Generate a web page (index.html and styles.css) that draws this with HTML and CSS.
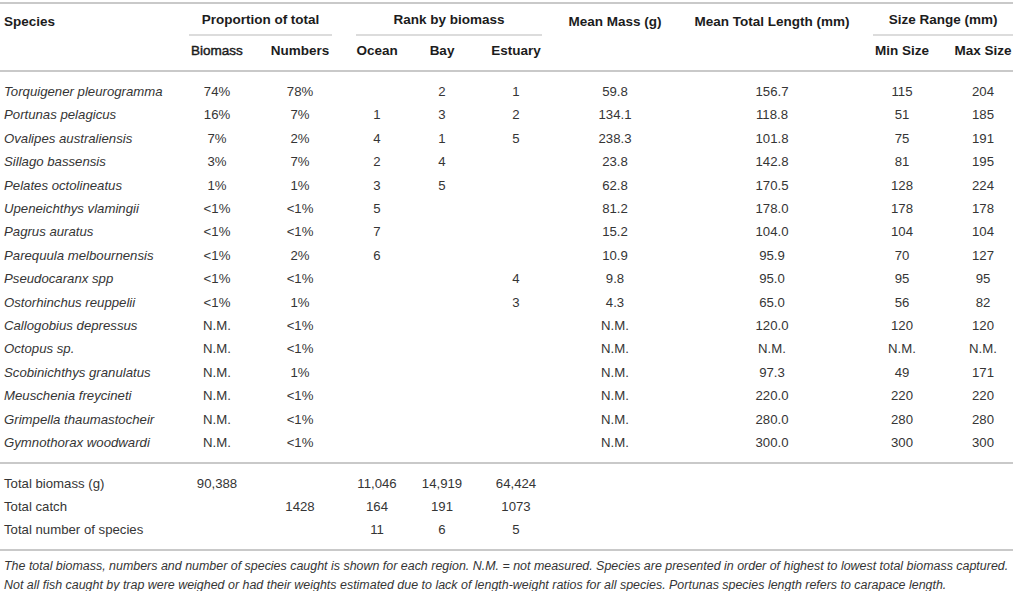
FILE: index.html
```html
<!DOCTYPE html>
<html lang="en">
<head>
<meta charset="utf-8">
<title>Species catch table</title>
<link rel="stylesheet" href="styles.css">
</head>
<body>
<div class="page">
<table class="tbl">
  <colgroup>
    <col class="c-sp"><col class="c-b"><col class="c-n"><col class="c-o"><col class="c-bay"><col class="c-e"><col class="c-mm"><col class="c-ml"><col class="c-min"><col class="c-max">
  </colgroup>
  <thead>
    <tr class="h1">
      <th rowspan="2" class="sp top">Species</th>
      <th colspan="2" class="grpcell"><div class="grp g-prop">Proportion of total</div></th>
      <th colspan="3" class="grpcell"><div class="grp g-rank">Rank by biomass</div></th>
      <th rowspan="2" class="top mm">Mean Mass (g)</th>
      <th rowspan="2" class="top ml">Mean Total Length (mm)</th>
      <th colspan="2" class="grpcell"><div class="grp g-size">Size Range (mm)</div></th>
    </tr>
    <tr class="h2">
      <th class="b semi">Biomass</th>
      <th class="n">Numbers</th>
      <th class="o">Ocean</th>
      <th class="bay">Bay</th>
      <th class="e">Estuary</th>
      <th class="min">Min Size</th>
      <th class="max">Max Size</th>
    </tr>
  </thead>
  <tbody class="data">
    <tr class="first"><td class="sp it">Torquigener pleurogramma</td><td class="b">74%</td><td class="n">78%</td><td class="o"></td><td class="bay">2</td><td class="e">1</td><td class="mm">59.8</td><td class="ml">156.7</td><td class="min">115</td><td class="max">204</td></tr>
    <tr><td class="sp it">Portunas pelagicus</td><td class="b">16%</td><td class="n">7%</td><td class="o">1</td><td class="bay">3</td><td class="e">2</td><td class="mm">134.1</td><td class="ml">118.8</td><td class="min">51</td><td class="max">185</td></tr>
    <tr><td class="sp it">Ovalipes australiensis</td><td class="b">7%</td><td class="n">2%</td><td class="o">4</td><td class="bay">1</td><td class="e">5</td><td class="mm">238.3</td><td class="ml">101.8</td><td class="min">75</td><td class="max">191</td></tr>
    <tr><td class="sp it">Sillago bassensis</td><td class="b">3%</td><td class="n">7%</td><td class="o">2</td><td class="bay">4</td><td class="e"></td><td class="mm">23.8</td><td class="ml">142.8</td><td class="min">81</td><td class="max">195</td></tr>
    <tr><td class="sp it">Pelates octolineatus</td><td class="b">1%</td><td class="n">1%</td><td class="o">3</td><td class="bay">5</td><td class="e"></td><td class="mm">62.8</td><td class="ml">170.5</td><td class="min">128</td><td class="max">224</td></tr>
    <tr><td class="sp it">Upeneichthys vlamingii</td><td class="b">&lt;1%</td><td class="n">&lt;1%</td><td class="o">5</td><td class="bay"></td><td class="e"></td><td class="mm">81.2</td><td class="ml">178.0</td><td class="min">178</td><td class="max">178</td></tr>
    <tr><td class="sp it">Pagrus auratus</td><td class="b">&lt;1%</td><td class="n">&lt;1%</td><td class="o">7</td><td class="bay"></td><td class="e"></td><td class="mm">15.2</td><td class="ml">104.0</td><td class="min">104</td><td class="max">104</td></tr>
    <tr><td class="sp it">Parequula melbournensis</td><td class="b">&lt;1%</td><td class="n">2%</td><td class="o">6</td><td class="bay"></td><td class="e"></td><td class="mm">10.9</td><td class="ml">95.9</td><td class="min">70</td><td class="max">127</td></tr>
    <tr><td class="sp it">Pseudocaranx spp</td><td class="b">&lt;1%</td><td class="n">&lt;1%</td><td class="o"></td><td class="bay"></td><td class="e">4</td><td class="mm">9.8</td><td class="ml">95.0</td><td class="min">95</td><td class="max">95</td></tr>
    <tr><td class="sp it">Ostorhinchus reuppelii</td><td class="b">&lt;1%</td><td class="n">1%</td><td class="o"></td><td class="bay"></td><td class="e">3</td><td class="mm">4.3</td><td class="ml">65.0</td><td class="min">56</td><td class="max">82</td></tr>
    <tr><td class="sp it">Callogobius depressus</td><td class="b">N.M.</td><td class="n">&lt;1%</td><td class="o"></td><td class="bay"></td><td class="e"></td><td class="mm">N.M.</td><td class="ml">120.0</td><td class="min">120</td><td class="max">120</td></tr>
    <tr><td class="sp it">Octopus sp.</td><td class="b">N.M.</td><td class="n">&lt;1%</td><td class="o"></td><td class="bay"></td><td class="e"></td><td class="mm">N.M.</td><td class="ml">N.M.</td><td class="min">N.M.</td><td class="max">N.M.</td></tr>
    <tr><td class="sp it">Scobinichthys granulatus</td><td class="b">N.M.</td><td class="n">1%</td><td class="o"></td><td class="bay"></td><td class="e"></td><td class="mm">N.M.</td><td class="ml">97.3</td><td class="min">49</td><td class="max">171</td></tr>
    <tr><td class="sp it">Meuschenia freycineti</td><td class="b">N.M.</td><td class="n">&lt;1%</td><td class="o"></td><td class="bay"></td><td class="e"></td><td class="mm">N.M.</td><td class="ml">220.0</td><td class="min">220</td><td class="max">220</td></tr>
    <tr><td class="sp it">Grimpella thaumastocheir</td><td class="b">N.M.</td><td class="n">&lt;1%</td><td class="o"></td><td class="bay"></td><td class="e"></td><td class="mm">N.M.</td><td class="ml">280.0</td><td class="min">280</td><td class="max">280</td></tr>
    <tr class="last"><td class="sp it">Gymnothorax woodwardi</td><td class="b">N.M.</td><td class="n">&lt;1%</td><td class="o"></td><td class="bay"></td><td class="e"></td><td class="mm">N.M.</td><td class="ml">300.0</td><td class="min">300</td><td class="max">300</td></tr>
  </tbody>
  <tbody class="totals">
    <tr class="first"><td class="sp">Total biomass (g)</td><td class="b">90,388</td><td class="n"></td><td class="o">11,046</td><td class="bay">14,919</td><td class="e">64,424</td><td class="mm"></td><td class="ml"></td><td class="min"></td><td class="max"></td></tr>
    <tr><td class="sp">Total catch</td><td class="b"></td><td class="n">1428</td><td class="o">164</td><td class="bay">191</td><td class="e">1073</td><td class="mm"></td><td class="ml"></td><td class="min"></td><td class="max"></td></tr>
    <tr class="last"><td class="sp">Total number of species</td><td class="b"></td><td class="n"></td><td class="o">11</td><td class="bay">6</td><td class="e">5</td><td class="mm"></td><td class="ml"></td><td class="min"></td><td class="max"></td></tr>
  </tbody>
</table>
<p class="note">The total biomass, numbers and number of species caught is shown for each region. N.M. = not measured. Species are presented in order of highest to lowest total biomass captured.<br>Not all fish caught by trap were weighed or had their weights estimated due to lack of length-weight ratios for all species. Portunas species length refers to carapace length.</p>
</div>
</body>
</html>
```

FILE: styles.css
```css
html, body {
  margin: 0;
  padding: 0;
  background: #ffffff;
}

body {
  font-family: "Liberation Sans", Arial, Helvetica, sans-serif;
  color: #333333;
}

.page {
  width: 1013px;
  padding-top: 2px;
}

.tbl {
  width: 1013px;
  border-collapse: collapse;
  table-layout: fixed;
  border-top: 2px solid #c9c9c9;
}

.c-sp  { width: 180px; }
.c-b   { width: 74px; }
.c-n   { width: 92px; }
.c-o   { width: 62px; }
.c-bay { width: 68px; }
.c-e   { width: 80px; }
.c-mm  { width: 118px; }
.c-ml  { width: 196px; }
.c-min { width: 64px; }
.c-max { width: 79px; }

th, td {
  padding: 0;
  text-align: center;
  white-space: nowrap;
}

th {
  font-size: 13.5px;
  font-weight: bold;
  color: #1c1c1c;
}

thead .h1 th {
  height: 32px;
  vertical-align: middle;
}

thead th.top {
  vertical-align: top;
  padding-top: 10px;
  border-bottom: 2px solid #c9c9c9;
}

thead .h2 th {
  height: 29px;
  padding-bottom: 5px;
  vertical-align: middle;
  border-bottom: 2px solid #c9c9c9;
}

.grp {
  height: 30px;
  line-height: 31px;
  border-bottom: 2px solid #dcdcdc;
}

.g-prop { margin: 0 14px 0 9px; }
.g-rank { margin: 0 14px 0 10px; }
.g-size { margin: 0 0 0 3px; }

.semi {
  font-weight: normal;
  -webkit-text-stroke: 0.45px #1c1c1c;
}

th.sp, td.sp {
  text-align: left;
  padding-left: 4px;
}

td {
  font-size: 13.2px;
  line-height: 23.4px;
  color: #353535;
}

td.it { font-style: italic; }

.data tr.first td, .totals tr.first td { padding-top: 8px; }
.data tr.last td, .totals tr.last td { padding-bottom: 7px; }

.data tr.last td, .totals tr.last td {
  border-bottom: 2px solid #c9c9c9;
}

td.max, th.max { padding-left: 19px; }

.note {
  margin: 6px 0 0 4px;
  font-size: 12.45px;
  line-height: 19.5px;
  font-style: italic;
  white-space: nowrap;
  color: #353535;
}
```
